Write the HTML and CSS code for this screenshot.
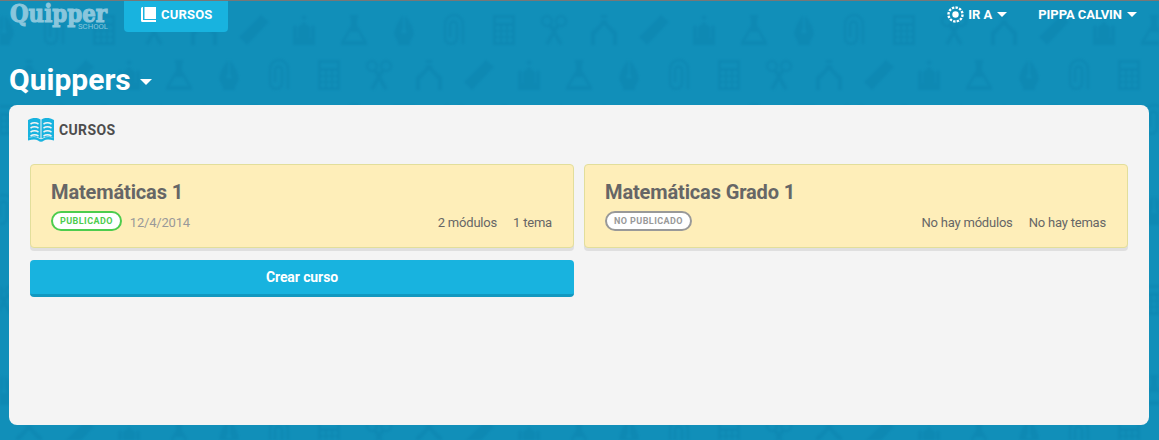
FILE: index.html
```
<!DOCTYPE html>
<html lang="es">
<head>
    <meta charset="UTF-8">
    <meta name="viewport" content="width=device-width, initial-scale=1.0">
    <title>Quipper School</title>
    <link rel="stylesheet" href="styles.css">
</head>
<body>
    <!-- school supplies wallpaper -->
    <svg class="wallpaper" aria-hidden="true">
        <defs>
            <g id="strip">
                <g transform="translate(4 30)">
                    <path class="ink" d="M-1-15v14a2.500 2.500 0 1 0 2 0v-14q8 10 9 19-2 5-4 8v3h-12v-3q-2-3-4-8 1-9 9-19z"/>
                </g>
                <g transform="translate(54 30)">
                    <path class="line" d="M9 14V-6a8 8 0 0 0-18 0V8a6 6 0 0 0 12 0V-5a3.500 3.500 0 0 0-7 0V7"/>
                </g>
                <g transform="translate(104 30)">
                    <path class="ink" fill-rule="evenodd" d="M-11-15h22v30h-22zM-8-12v5h16v-5zM-8-4v4h4v-4zM-2-4v4h4v-4zM4-4v4h4v-4zM-8 2v4h4v-4zM-2 2v4h4v-4zM4 2v4h4v-4zM-8 8v4h4v-4zM-2 8v4h4v-4zM4 8v4h4v-4z"/>
                </g>
                <g transform="translate(154 30)">
                    <circle class="line" cx="-7" cy="-9" r="5"/>
                    <circle class="line" cx="7" cy="-9" r="5"/>
                    <path class="line wide" d="M-4-5 7 14M4-5-7 14"/>
                </g>
                <g transform="translate(204 30)">
                    <path class="ink" d="M-3-15h6v3h-6zM-3-10h6l1 4 9 8v13h-4V5L0-5-9 5v10h-4V2l9-8z"/>
                </g>
                <g transform="translate(254 30)">
                    <path class="ink" d="M7-15l8 7L-7 15l-8-8z"/>
                </g>
                <g transform="translate(304 30)">
                    <path class="ink" d="M-11 15V-3l2-2 2 2V8h1V-3l6-5 6 5V8h1V-3l2-2 2 2v18zM-3-12l3-3 3 3-3 2z"/>
                </g>
                <g transform="translate(354 30)">
                    <path class="ink" fill-rule="evenodd" d="M-4-15h8v3l-1 1v6l10 17v3h-26v-3l10-17v-6l-1-1zM-4 2-9 11H9L4 2z"/>
                </g>
            </g>
            <g id="row">
                <use href="#strip"/>
                <use href="#strip" x="400"/>
            </g>
            <pattern id="supplies" width="400" height="360" patternUnits="userSpaceOnUse">
                <use href="#row"/>
                <use href="#row" x="-175" y="45"/>
                <use href="#row" x="-100" y="90"/>
                <use href="#row" x="-50" y="180"/>
                <use href="#row" x="-150" y="270"/>
            </pattern>
        </defs>
        <rect width="100%" height="100%" fill="url(#supplies)"/>
    </svg>

    <header class="navbar">
        <svg class="logo" width="100" height="32" viewBox="0 0 100 32">
            <text class="logo-name" x="0" y="21" textLength="97" lengthAdjust="spacingAndGlyphs">Quipper</text>
            <text class="logo-sub" x="68" y="28" textLength="30" lengthAdjust="spacingAndGlyphs">SCHOOL</text>
        </svg>
        <a class="nav-tab" href="#">
            <svg width="15" height="15" viewBox="0 0 15 15">
                <path fill="#fff" d="M3.500 0H15v12H3.500zM1.500 0H2v13h13v2H1.500A1.500 1.500 0 0 1 0 13.500v-12A1.500 1.500 0 0 1 1.500 0z"/>
            </svg>
            <span>CURSOS</span>
        </a>
        <nav class="nav-menu">
            <a class="nav-link" href="#">
                <svg width="17" height="17" viewBox="-8.500 -8.500 17 17">
                    <circle r="3.200" fill="#fff"/>
                    <circle class="dots" r="7" pathLength="36"/>
                </svg>
                <span class="go-to">IR A</span>
                <i class="caret"></i>
            </a>
            <a class="nav-link" href="#">
                <span class="user-name">PIPPA CALVIN</span>
                <i class="caret"></i>
            </a>
        </nav>
    </header>

    <h1 class="page-title"><span>Quippers</span> <i class="caret"></i></h1>

    <main class="panel">
        <h2 class="panel-title">
            <svg width="26" height="24" viewBox="0 0 26 24">
                <path fill="#18b3df" d="M0 2Q7-2 12.500 1.500v19Q7 17 0 20zM26 2Q19-2 13.500 1.500v19Q19 17 26 20zM0 20q7-2 11 0.500 2 1.500 4 0 4-2.500 11-0.500v2.500q-7-2-10 0-3 2.500-6 0-3-2-10 0z"/>
                <path class="book-lines" d="M2.500 6q4-2.500 8 0M2.500 10q4-2.500 8 0M2.500 14q4-2.500 8 0M2.500 18q4-2.500 8 0M15.500 6q4-2.500 8 0M15.500 10q4-2.500 8 0M15.500 14q4-2.500 8 0M15.500 18q4-2.500 8 0"/>
            </svg>
            <span>CURSOS</span>
        </h2>
        <div class="courses">
            <article class="course">
                <h3>Matemáticas 1</h3>
                <div class="course-info">
                    <span class="badge published">PUBLICADO</span>
                    <span class="date">12/4/2014</span>
                    <span class="modules">2 módulos</span>
                    <span class="topics">1 tema</span>
                </div>
            </article>
            <article class="course">
                <h3>Matemáticas Grado 1</h3>
                <div class="course-info">
                    <span class="badge">NO PUBLICADO</span>
                    <span class="modules">No hay módulos</span>
                    <span class="topics">No hay temas</span>
                </div>
            </article>
            <button class="create-button">Crear curso</button>
        </div>
    </main>
</body>
</html>
```

FILE: styles.css
```
* {
    box-sizing: border-box;
}
body {
    margin: 0;
    height: 440px;
    overflow: hidden;
    background: #118fb9;
    border-top: 1px solid #777;
    font-family: Roboto, sans-serif;
    color: #666;
}
a {
    color: #fff;
    text-decoration: none;
}
.wallpaper {
    position: absolute;
    top: 0;
    left: 0;
    width: 100%;
    height: 100%;
    z-index: -1;
    opacity: 0.65;
    filter: blur(1px);
}
.ink {
    fill: #0d86b1;
}
.line {
    fill: none;
    stroke: #0d86b1;
    stroke-width: 2.5;
}
.line.wide {
    stroke-width: 4;
}
.navbar {
    display: flex;
    align-items: flex-start;
    height: 31px;
    padding: 0 22px 0 10px;
}
.logo {
    fill: #8ac6dc;
    overflow: visible;
}
.logo-name {
    font: bold 25px "DejaVu Serif", serif;
    stroke: #8ac6dc;
    stroke-width: 1.2;
}
.logo-sub {
    font: 8px Roboto, sans-serif;
}
.nav-tab {
    display: flex;
    align-items: center;
    gap: 5px;
    width: 104px;
    height: 31px;
    margin-left: 14px;
    padding: 0 0 5px 17px;
    background: #18b3df;
    border-radius: 0 0 4px 4px;
    font-size: 13px;
    font-weight: 700;
    letter-spacing: 0.2px;
}
.nav-menu {
    display: flex;
    gap: 31px;
    margin-left: auto;
}
.nav-link {
    display: flex;
    align-items: center;
    height: 26px;
    font-size: 13px;
    font-weight: 700;
}
.user-name {
    letter-spacing: -0.05px;
}
.nav-link svg {
    margin-right: 4px;
}
.dots {
    fill: none;
    stroke: #fff;
    stroke-width: 2.4;
    stroke-dasharray: 2 1;
}
.caret {
    border: 5px solid transparent;
    border-top-color: #fff;
    border-bottom: 0;
    margin-left: 5px;
}
.page-title {
    display: flex;
    align-items: center;
    height: 73px;
    margin: 0;
    padding: 22px 0 0 9px;
    color: #fff;
    font-size: 30px;
    font-weight: 700;
}
.page-title .caret {
    border-width: 6px 6px 0;
    margin: 4px 0 0 9px;
}
.panel {
    height: 320px;
    margin: 0 10px 0 9px;
    padding: 12px 21px;
    background: #f4f4f4;
    border-radius: 8px;
}
.panel-title {
    display: flex;
    align-items: center;
    gap: 5px;
    height: 26px;
    margin: 0 0 21px -2px;
    color: #4d4d4d;
    font-size: 14px;
    font-weight: 700;
    letter-spacing: 0.35px;
}
.panel-title svg {
    margin-top: -1px;
}
.book-lines {
    fill: none;
    stroke: #f4f4f4;
    stroke-width: 1.5;
}
.courses {
    display: grid;
    grid-template-columns: 1fr 1fr;
    gap: 12px 10px;
}
.course {
    height: 84px;
    padding: 15px 21px 0 20px;
    background: #feeeb9;
    border: 1px solid #e2de9b;
    border-radius: 4px;
    box-shadow: 0 3px 0 #dfdfdf;
}
.course h3 {
    margin: 0;
    font-size: 20px;
    font-weight: 700;
    letter-spacing: -0.13px;
    line-height: 24px;
}
.course-info {
    display: flex;
    margin-top: 7px;
    font-size: 13px;
    letter-spacing: -0.2px;
    line-height: 24px;
}
.badge {
    height: 20px;
    padding: 0 7px;
    background: #fff;
    border: 2px solid #999;
    border-radius: 10px;
    color: #999;
    font-size: 9px;
    font-weight: 700;
    letter-spacing: 0.43px;
    line-height: 16px;
}
.badge.published {
    border-color: #4dcc4d;
    color: #4dcc4d;
}
.date {
    margin-left: 8px;
    color: #999;
}
.modules {
    margin-left: auto;
}
.topics {
    margin-left: 16px;
}
.create-button {
    height: 37px;
    padding: 0 0 1px;
    background: #18b3df;
    border: 0;
    border-bottom: 3px solid #1298c0;
    border-radius: 4px;
    color: #fff;
    font: 700 14px Roboto, sans-serif;
    letter-spacing: -0.1px;
}
```
